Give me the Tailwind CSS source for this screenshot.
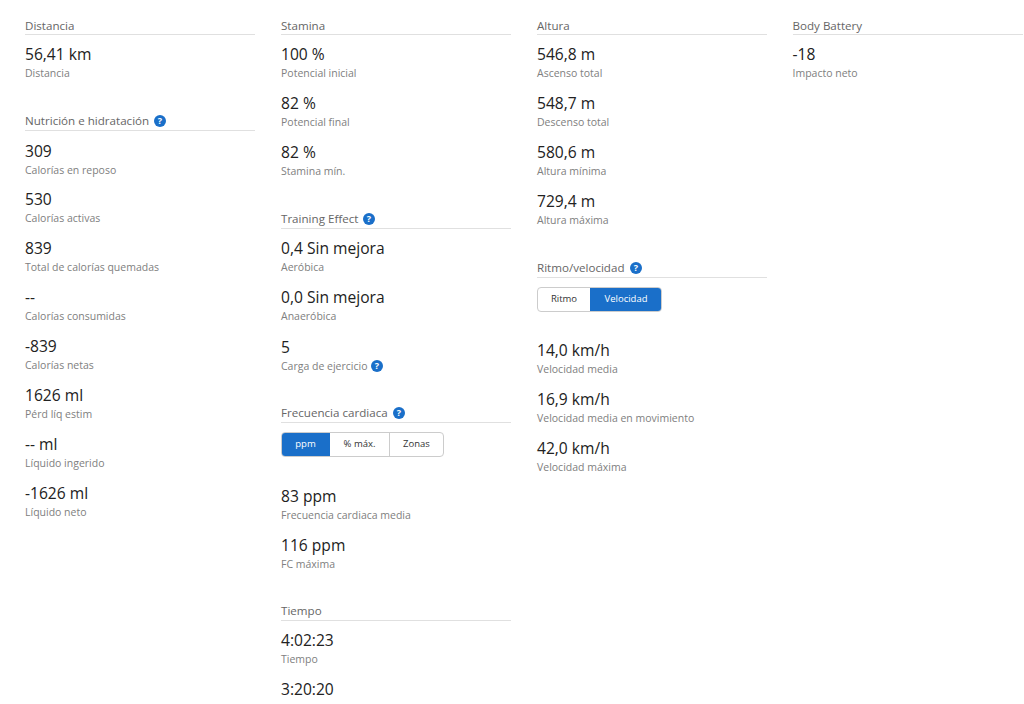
<!DOCTYPE html>
<html><head><meta charset="utf-8"><script src="https://cdn.jsdelivr.net/npm/@tailwindcss/browser@4"></script></head>
<body class="bg-white overflow-hidden h-[704px] font-['Open_Sans',sans-serif]">
<div class="grid grid-cols-[256px_256px_255.5px_230px] pl-[25px] pt-[19px] h-[704px] overflow-hidden items-start">

<div class="flex flex-col">
 <section class="mb-[30px]">
  <h3 class="h-[16px] pb-[1px] border-b border-[#e0e0e0] text-[11.6px] leading-[16px] text-[#666] w-[230px] flex items-center gap-[5px]">Distancia</h3>
  <div class="h-[49px] pt-[8px]"><p class="text-[15.6px] leading-[22px] text-[#222]">56,41 km</p><p class="text-[10.5px] leading-[14px] mt-[1px] text-[#808080]">Distancia</p></div>
 </section>
 <section>
  <h3 class="h-[17px] pb-[2px] border-b border-[#e0e0e0] text-[11.6px] leading-[16px] text-[#666] w-[230px] flex items-center gap-[5px]">Nutrición e hidratación <svg width="12" height="12" viewBox="0 0 12 12"><circle cx="6" cy="6" r="6" fill="#1a6fc9"/><text x="6" y="9" text-anchor="middle" font-size="9" font-weight="700" fill="#fff" font-family="Open Sans">?</text></svg></h3>
  <div class="h-[49px] pt-[9px]"><p class="text-[15.6px] leading-[22px] text-[#222]">309</p><p class="text-[10.5px] leading-[14px] mt-[1px] text-[#808080]">Calorías en reposo</p></div>
  <div class="h-[49px] pt-[8px]"><p class="text-[15.6px] leading-[22px] text-[#222]">530</p><p class="text-[10.5px] leading-[14px] mt-[1px] text-[#808080]">Calorías activas</p></div>
  <div class="h-[49px] pt-[8px]"><p class="text-[15.6px] leading-[22px] text-[#222]">839</p><p class="text-[10.5px] leading-[14px] mt-[1px] text-[#808080]">Total de calorías quemadas</p></div>
  <div class="h-[49px] pt-[8px]"><p class="text-[15.6px] leading-[22px] text-[#222]">--</p><p class="text-[10.5px] leading-[14px] mt-[1px] text-[#808080]">Calorías consumidas</p></div>
  <div class="h-[49px] pt-[8px]"><p class="text-[15.6px] leading-[22px] text-[#222]">-839</p><p class="text-[10.5px] leading-[14px] mt-[1px] text-[#808080]">Calorías netas</p></div>
  <div class="h-[49px] pt-[8px]"><p class="text-[15.6px] leading-[22px] text-[#222]">1626 ml</p><p class="text-[10.5px] leading-[14px] mt-[1px] text-[#808080]">Pérd líq estim</p></div>
  <div class="h-[49px] pt-[8px]"><p class="text-[15.6px] leading-[22px] text-[#222]">-- ml</p><p class="text-[10.5px] leading-[14px] mt-[1px] text-[#808080]">Líquido ingerido</p></div>
  <div class="h-[49px] pt-[8px]"><p class="text-[15.6px] leading-[22px] text-[#222]">-1626 ml</p><p class="text-[10.5px] leading-[14px] mt-[1px] text-[#808080]">Líquido neto</p></div>
 </section>
</div>

<div class="flex flex-col">
 <section class="mb-[30px]">
  <h3 class="h-[16px] pb-[1px] border-b border-[#e0e0e0] text-[11.6px] leading-[16px] text-[#666] w-[230px] flex items-center gap-[5px]">Stamina</h3>
  <div class="h-[49px] pt-[8px]"><p class="text-[15.6px] leading-[22px] text-[#222]">100 %</p><p class="text-[10.5px] leading-[14px] mt-[1px] text-[#808080]">Potencial inicial</p></div>
  <div class="h-[49px] pt-[8px]"><p class="text-[15.6px] leading-[22px] text-[#222]">82 %</p><p class="text-[10.5px] leading-[14px] mt-[1px] text-[#808080]">Potencial final</p></div>
  <div class="h-[49px] pt-[8px]"><p class="text-[15.6px] leading-[22px] text-[#222]">82 %</p><p class="text-[10.5px] leading-[14px] mt-[1px] text-[#808080]">Stamina mín.</p></div>
 </section>
 <section class="mb-[30px]">
  <h3 class="h-[17px] pb-[2px] border-b border-[#e0e0e0] text-[11.6px] leading-[16px] text-[#666] w-[230px] flex items-center gap-[5px]">Training Effect <svg width="12" height="12" viewBox="0 0 12 12"><circle cx="6" cy="6" r="6" fill="#1a6fc9"/><text x="6" y="9" text-anchor="middle" font-size="9" font-weight="700" fill="#fff" font-family="Open Sans">?</text></svg></h3>
  <div class="h-[49px] pt-[8px]"><p class="text-[15.6px] leading-[22px] text-[#222]">0,4 Sin mejora</p><p class="text-[10.5px] leading-[14px] mt-[1px] text-[#808080]">Aeróbica</p></div>
  <div class="h-[49px] pt-[8px]"><p class="text-[15.6px] leading-[22px] text-[#222]">0,0 Sin mejora</p><p class="text-[10.5px] leading-[14px] mt-[1px] text-[#808080]">Anaeróbica</p></div>
  <div class="h-[49px] pt-[9px]"><p class="text-[15.6px] leading-[22px] text-[#222]">5</p><p class="text-[10.5px] leading-[14px] mt-[1px] text-[#808080] flex items-center gap-[4px]">Carga de ejercicio <svg width="12" height="12" viewBox="0 0 12 12"><circle cx="6" cy="6" r="6" fill="#1a6fc9"/><text x="6" y="9" text-anchor="middle" font-size="9" font-weight="700" fill="#fff" font-family="Open Sans">?</text></svg></p></div>
 </section>
 <section class="mb-[29px]">
  <h3 class="h-[17px] pb-[2px] border-b border-[#e0e0e0] text-[11.6px] leading-[16px] text-[#666] w-[230px] flex items-center gap-[5px]">Frecuencia cardiaca <svg width="12" height="12" viewBox="0 0 12 12"><circle cx="6" cy="6" r="6" fill="#1a6fc9"/><text x="6" y="9" text-anchor="middle" font-size="9" font-weight="700" fill="#fff" font-family="Open Sans">?</text></svg></h3>
  <div class="flex w-[163px] h-[25px] mt-[9px] mb-[20px] rounded-[4px] border border-[#ccc] overflow-hidden text-[9.5px] text-[#333]">
   <span class="w-[49px] -my-px -ml-px bg-[#1a6fc9] text-white flex items-center justify-center">ppm</span>
   <span class="w-[60px] border-r border-[#ccc] flex items-center justify-center">% máx.</span>
   <span class="flex-1 flex items-center justify-center">Zonas</span>
  </div>
  <div class="h-[49px] pt-[8px]"><p class="text-[15.6px] leading-[22px] text-[#222]">83 ppm</p><p class="text-[10.5px] leading-[14px] mt-[1px] text-[#808080]">Frecuencia cardiaca media</p></div>
  <div class="h-[49px] pt-[8px]"><p class="text-[15.6px] leading-[22px] text-[#222]">116 ppm</p><p class="text-[10.5px] leading-[14px] mt-[1px] text-[#808080]">FC máxima</p></div>
 </section>
 <section>
  <h3 class="h-[17px] pb-[2px] border-b border-[#e0e0e0] text-[11.6px] leading-[16px] text-[#666] w-[230px] flex items-center gap-[5px]">Tiempo</h3>
  <div class="h-[49px] pt-[8px]"><p class="text-[15.6px] leading-[22px] text-[#222]">4:02:23</p><p class="text-[10.5px] leading-[14px] mt-[1px] text-[#808080]">Tiempo</p></div>
  <div class="pt-[8px]"><p class="text-[15.6px] leading-[22px] text-[#222]">3:20:20</p></div>
 </section>
</div>

<div class="flex flex-col">
 <section class="mb-[30px]">
  <h3 class="h-[16px] pb-[1px] border-b border-[#e0e0e0] text-[11.6px] leading-[16px] text-[#666] w-[230px] flex items-center gap-[5px]">Altura</h3>
  <div class="h-[49px] pt-[8px]"><p class="text-[15.6px] leading-[22px] text-[#222]">546,8 m</p><p class="text-[10.5px] leading-[14px] mt-[1px] text-[#808080]">Ascenso total</p></div>
  <div class="h-[49px] pt-[8px]"><p class="text-[15.6px] leading-[22px] text-[#222]">548,7 m</p><p class="text-[10.5px] leading-[14px] mt-[1px] text-[#808080]">Descenso total</p></div>
  <div class="h-[49px] pt-[8px]"><p class="text-[15.6px] leading-[22px] text-[#222]">580,6 m</p><p class="text-[10.5px] leading-[14px] mt-[1px] text-[#808080]">Altura mínima</p></div>
  <div class="h-[49px] pt-[8px]"><p class="text-[15.6px] leading-[22px] text-[#222]">729,4 m</p><p class="text-[10.5px] leading-[14px] mt-[1px] text-[#808080]">Altura máxima</p></div>
 </section>
 <section>
  <h3 class="h-[17px] pb-[2px] border-b border-[#e0e0e0] text-[11.6px] leading-[16px] text-[#666] w-[230px] flex items-center gap-[5px]">Ritmo/velocidad <svg width="12" height="12" viewBox="0 0 12 12"><circle cx="6" cy="6" r="6" fill="#1a6fc9"/><text x="6" y="9" text-anchor="middle" font-size="9" font-weight="700" fill="#fff" font-family="Open Sans">?</text></svg></h3>
  <div class="flex w-[125px] h-[25px] mt-[9px] mb-[19px] rounded-[4px] border border-[#ccc] overflow-hidden text-[9.5px] text-[#333]">
   <span class="w-[52px] flex items-center justify-center">Ritmo</span>
   <span class="flex-1 -my-px -mr-px bg-[#1a6fc9] text-white flex items-center justify-center">Velocidad</span>
  </div>
  <div class="h-[49px] pt-[8px]"><p class="text-[15.6px] leading-[22px] text-[#222]">14,0 km/h</p><p class="text-[10.5px] leading-[14px] mt-[1px] text-[#808080]">Velocidad media</p></div>
  <div class="h-[49px] pt-[8px]"><p class="text-[15.6px] leading-[22px] text-[#222]">16,9 km/h</p><p class="text-[10.5px] leading-[14px] mt-[1px] text-[#808080]">Velocidad media en movimiento</p></div>
  <div class="h-[49px] pt-[8px]"><p class="text-[15.6px] leading-[22px] text-[#222]">42,0 km/h</p><p class="text-[10.5px] leading-[14px] mt-[1px] text-[#808080]">Velocidad máxima</p></div>
 </section>
</div>

<div class="flex flex-col">
 <section>
  <h3 class="h-[16px] pb-[1px] border-b border-[#e0e0e0] text-[11.6px] leading-[16px] text-[#666] w-[230px] flex items-center gap-[5px]">Body Battery</h3>
  <div class="h-[49px] pt-[8px]"><p class="text-[15.6px] leading-[22px] text-[#222]">-18</p><p class="text-[10.5px] leading-[14px] mt-[1px] text-[#808080]">Impacto neto</p></div>
 </section>
</div>

</div>
</body></html>
